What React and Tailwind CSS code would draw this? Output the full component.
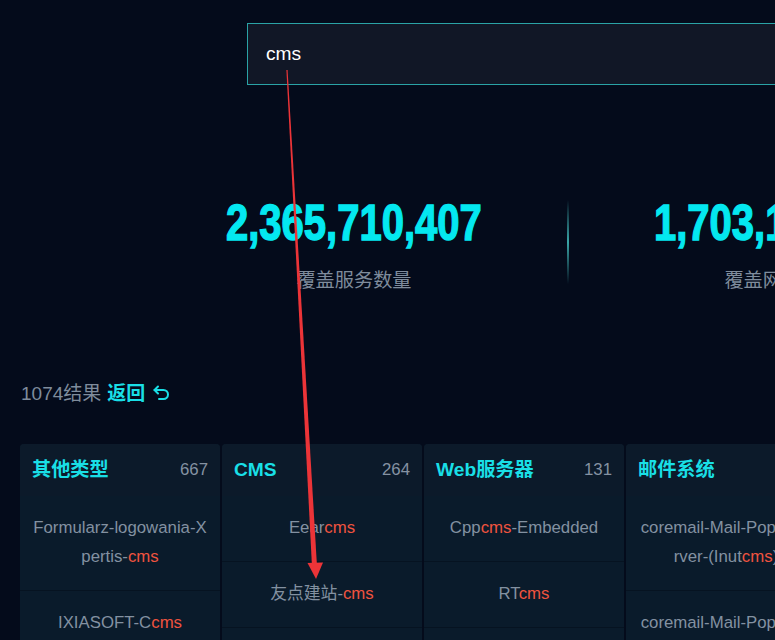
import React from 'react';

const columns = [
  {
    title: '其他类型',
    count: 667,
    items: [
      ['Formularz-logowania-Xpertis-', 'cms', ''],
      ['IXIASOFT-C', 'cms', ''],
      ['Web', 'cms', '-Portal'],
    ],
  },
  {
    title: 'CMS',
    count: 264,
    items: [
      ['Eear', 'cms', ''],
      ['友点建站-', 'cms', ''],
      ['Jee', 'cms', ''],
    ],
  },
  {
    title: 'Web服务器',
    count: 131,
    items: [
      ['Cpp', 'cms', '-Embedded'],
      ['RT', 'cms', ''],
      ['Php', 'cms', '-Server'],
    ],
  },
  {
    title: '邮件系统',
    count: 12,
    items: [
      ['coremail-Mail-Pop3-Server-(Inut', 'cms', ')'],
      ['coremail-Mail-Pop3-Server-(', 'cms', ')'],
    ],
  },
];

// return arrow: head pointing left at top, loop round on the right
const ReturnIcon = () => (
  <svg width="20" height="20" viewBox="0 0 20 20" fill="none" stroke="#19dfe6" strokeWidth="2" strokeLinecap="round" strokeLinejoin="round">
    <path d="M6 2.5 2.5 6 6 9.5" />
    <path d="M2.5 6h9a4.5 4.5 0 0 1 0 9H7" />
  </svg>
);

const Stat = ({ value, label }) => (
  <div className="w-[426px] shrink-0 flex flex-col items-center">
    <span className="inline-block font-['Liberation_Sans',sans-serif] font-bold text-[50px] leading-none text-[#04e8f0] scale-x-[0.8] [-webkit-text-stroke:1.4px_#04e8f0]">
      {value}
    </span>
    <span className="mt-[19px] text-[19.2px] leading-[28px] text-[#7f8c9c]">{label}</span>
  </div>
);

const Column = ({ title, count, items }) => (
  <div className="w-[200px] shrink-0 rounded-t-[4px] bg-[#0a1b2b] overflow-hidden">
    <div className="h-[52px] flex items-center justify-between px-[12px] bg-[#0c1a2a]">
      <span className="text-[19.2px] font-bold text-[#19dfe6]">{title}</span>
      <span className="text-[16.8px] text-[#8592a2]">{count}</span>
    </div>
    {items.map(([pre, hl, post], i) => (
      <div
        key={i}
        className="px-[13px] py-[18px] text-center text-[16.8px] leading-[28.8px] text-[#8391a1] break-all border-b border-[#061321]"
      >
        {pre}
        <span className="text-[#f0533f]">{hl}</span>
        {post}
      </div>
    ))}
  </div>
);

export default function App() {
  return (
    <div className="relative w-[775px] h-[640px] overflow-hidden bg-[#040b1b] font-['Liberation_Sans','Noto_Sans_CJK_SC',sans-serif]">
      {/* search */}
      <div className="pt-[23px] pl-[247px]">
        <div className="w-[800px] h-[62px] flex items-center pl-[18px] border border-[#2aa3a6] bg-[#111726] text-[19.2px] text-white">
          cms
        </div>
      </div>

      {/* stats */}
      <div className="mt-[113px] pl-[141px] flex items-start w-max">
        <Stat value="2,365,710,407" label="覆盖服务数量" />
        <div className="w-[2px] h-[84px] mt-[2px] shrink-0 bg-linear-to-b from-transparent via-[#3aa6a8] to-transparent" />
        <Stat value="1,703,142,658" label="覆盖网站数量" />
      </div>

      {/* result count */}
      <div className="mt-[85px] pl-[21px] flex items-center leading-[28px] text-[19px]">
        <span className="text-[#7f8c9c]">1074结果</span>
        <span className="ml-[6px] font-bold text-[#19dfe6]">返回</span>
        <span className="ml-[7px] flex items-center">
          <ReturnIcon />
        </span>
      </div>

      {/* category columns */}
      <div className="mt-[36px] pl-[20px] flex gap-[2px] items-start w-max">
        {columns.map((c) => (
          <Column key={c.title} {...c} />
        ))}
      </div>

      {/* red annotation arrow */}
      <svg className="absolute inset-0 pointer-events-none" width="775" height="640">
        <polygon points="286.4,70 287.6,70 316.8,563 311.8,563" fill="#ec3438" />
        <polygon points="307.5,563 323,562.5 316,579" fill="#ec3438" />
      </svg>
    </div>
  );
}
